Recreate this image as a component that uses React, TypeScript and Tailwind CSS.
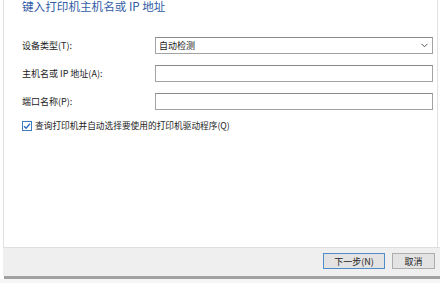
export default function App() {
  const rows = [
    { label: '设备类型(T):', value: '自动检测', select: true },
    { label: '主机名或 IP 地址(A):', value: '', select: false },
    { label: '端口名称(P):', value: '', select: false },
  ]

  return (
    <div
      className="flex h-[283px] w-[440px] flex-col overflow-hidden bg-white text-[#222]"
      style={{ fontFamily: '"Noto Sans CJK SC", "Liberation Sans", sans-serif' }}
    >
      {/* main panel */}
      <div className="ml-[3px] flex h-[247px] w-[435px] flex-col border-x border-[#e2e2e2] bg-white pl-[18px] pr-[4px]">
        <h1 className="text-[11.6px] leading-[13px] font-normal text-[#2f5ca6]">
          键入打印机主机名或 IP 地址
        </h1>

        <div className="mt-[24px] flex flex-col gap-[11px]">
          {rows.map((row) => (
            <div key={row.label} className="flex h-[17px] items-center">
              <label className="w-[133px] text-[9px] leading-[17px]">{row.label}</label>
              <div className="flex h-[17px] w-[278px] items-center justify-between border border-[#a3a3a3] border-t-[#8a8a8a] bg-white px-[3px]">
                <span className="text-[9px] leading-none">{row.value}</span>
                {row.select && (
                  <svg width="7" height="5" viewBox="0 0 7 5" className="mr-[1px]">
                    <path d="M0.5 0.8 L3.5 3.8 L6.5 0.8" fill="none" stroke="#555" strokeWidth="1" />
                  </svg>
                )}
              </div>
            </div>
          ))}

          <div className="flex h-[10px] items-center gap-[3px]">
            <div className="flex h-[10px] w-[10px] items-center justify-center border border-[#3d7bc4] bg-white">
              <svg width="8" height="8" viewBox="0 0 8 8">
                <path d="M1 4.2 L3.1 6.2 L7 1.6" fill="none" stroke="#2a6cc0" strokeWidth="1.4" />
              </svg>
            </div>
            <span className="text-[8.7px] leading-[10px]">查询打印机并自动选择要使用的打印机驱动程序(Q)</span>
          </div>
        </div>
      </div>

      {/* footer */}
      <div className="ml-[3px] flex h-[29px] justify-end gap-[7px] border-t border-[#dedede] bg-[#efefef] pt-[5px] pr-[5px]">
        <button className="h-[16px] w-[62px] border border-[#4f8cc9] bg-[#e3e3e3] text-[9px] leading-none text-[#222]">
          下一步(N)
        </button>
        <button className="h-[16px] w-[43px] border border-[#adadad] bg-[#e3e3e3] text-[9px] leading-none text-[#222]">
          取消
        </button>
      </div>
      <div className="ml-[4px] h-[3px] bg-[#a2a2a2]" />
      <div className="flex-1 bg-[#f6f6f6]" />
    </div>
  )
}
